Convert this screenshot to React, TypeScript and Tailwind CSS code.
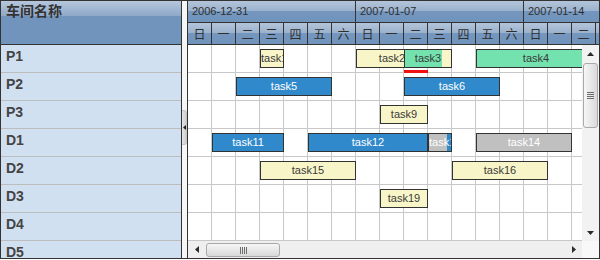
import React from 'react';

const DAYS = ['日', '一', '二', '三', '四', '五', '六'];
const WEEKS = ['2006-12-31', '2007-01-07', '2007-01-14'];
const ROWS = ['P1', 'P2', 'P3', 'D1', 'D2', 'D3', 'D4', 'D5'];

type Kind = 'yellow' | 'green' | 'blue' | 'gray';
type Task = {
  row: number;
  col: number;
  span: number;
  label: string;
  kind: Kind;
  progress?: { pct: number; kind: Kind };
};

const TASKS: Task[] = [
  { row: 0, col: 3, span: 1, label: 'task1', kind: 'yellow' },
  { row: 0, col: 7, span: 3, label: 'task2', kind: 'yellow' },
  { row: 0, col: 9, span: 2, label: 'task3', kind: 'yellow', progress: { pct: 80, kind: 'green' } },
  { row: 0, col: 12, span: 5, label: 'task4', kind: 'green' },
  { row: 1, col: 2, span: 4, label: 'task5', kind: 'blue' },
  { row: 1, col: 9, span: 4, label: 'task6', kind: 'blue' },
  { row: 2, col: 8, span: 2, label: 'task9', kind: 'yellow' },
  { row: 3, col: 1, span: 3, label: 'task11', kind: 'blue' },
  { row: 3, col: 5, span: 5, label: 'task12', kind: 'blue' },
  { row: 3, col: 10, span: 1, label: 'task13', kind: 'blue', progress: { pct: 82, kind: 'gray' } },
  { row: 3, col: 12, span: 4, label: 'task14', kind: 'gray' },
  { row: 4, col: 3, span: 4, label: 'task15', kind: 'yellow' },
  { row: 4, col: 11, span: 4, label: 'task16', kind: 'yellow' },
  { row: 5, col: 8, span: 2, label: 'task19', kind: 'yellow' },
];

const BG: Record<Kind, string> = {
  yellow: 'bg-[#f8f6c8]',
  green: 'bg-[#74e2ae]',
  blue: 'bg-[#3089cb]',
  gray: 'bg-[#c0c0c0]',
};

const TEXT: Record<Kind, string> = {
  yellow: 'text-[#3a3a3a]',
  green: 'text-[#3a3a3a]',
  blue: 'text-white',
  gray: 'text-white',
};

const GLOSS =
  'bg-[linear-gradient(to_bottom,#b3c5da_0%,#9bb2cd_47%,#7597bf_50%,#7093bb_100%)]';

function Bar({ t }: { t: Task }) {
  const top = t.progress ? t.progress.kind : t.kind;
  return (
    <div
      className={`absolute box-border border border-[#333] overflow-hidden ${BG[t.kind]}`}
      style={{ left: t.col * 24, top: t.row * 28 + 4, width: t.span * 24, height: 19 }}
    >
      {t.progress && (
        <div
          className={`absolute left-0 top-0 bottom-0 ${BG[t.progress.kind]}`}
          style={{ width: `${t.progress.pct}%` }}
        />
      )}
      <div className={`relative whitespace-nowrap text-center text-[11px] leading-[17px] ${TEXT[top]}`}>
        {t.label}
      </div>
    </div>
  );
}

function Tri({ dir }: { dir: 'up' | 'down' | 'left' | 'right' }) {
  if (dir === 'up')
    return (
      <svg width="7" height="4" viewBox="0 0 7 4">
        <path d="M0 4 L3.5 0 L7 4Z" fill="#2a2a2a" />
      </svg>
    );
  if (dir === 'down')
    return (
      <svg width="7" height="4" viewBox="0 0 7 4">
        <path d="M0 0 L3.5 4 L7 0Z" fill="#2a2a2a" />
      </svg>
    );
  if (dir === 'left')
    return (
      <svg width="4" height="7" viewBox="0 0 4 7">
        <path d="M4 0 L0 3.5 L4 7Z" fill="#2a2a2a" />
      </svg>
    );
  return (
    <svg width="4" height="7" viewBox="0 0 4 7">
      <path d="M0 0 L4 3.5 L0 7Z" fill="#2a2a2a" />
    </svg>
  );
}

export default function App() {
  return (
    <div className="w-[600px] h-[259px] box-border border border-[#333] flex overflow-hidden bg-white font-['Liberation_Sans','Noto_Sans_CJK_SC',sans-serif]">
      {/* Left panel */}
      <div className="w-[181px] shrink-0 h-full border-r border-[#333] flex flex-col overflow-hidden bg-[#d1e0f1]">
        <div className="h-[44px] shrink-0 border-b border-[#333] bg-[linear-gradient(to_bottom,#b6c7dc_0px,#8ea8c8_15px,#7194bc_15px,#7194bc_100%)]">
          <div className="pl-[5px] pt-[1px] text-[14px] leading-[17px] font-bold text-[#333] font-['Noto_Sans_CJK_SC',sans-serif]">
            车间名称
          </div>
        </div>
        {ROWS.map((r) => (
          <div
            key={r}
            className="h-[28px] shrink-0 border-b border-[#bdbdbd] pl-[5px] pt-[3px] text-[14px] leading-[16px] font-bold text-[#444]"
          >
            {r}
          </div>
        ))}
      </div>

      {/* Splitter */}
      <div className="relative w-[5px] shrink-0 h-full bg-[#f6f6f6]">
        <div className="absolute left-0 top-[109px] w-[5px] h-[35px] rounded-r-[3px] border border-l-0 border-[#c4c4c4] bg-[linear-gradient(to_right,#e4e4e4,#d0d0d0)] flex items-center justify-start pl-[1px]">
          <svg width="3" height="5" viewBox="0 0 3 5">
            <path d="M3 0 L0 2.5 L3 5Z" fill="#222" />
          </svg>
        </div>
      </div>

      {/* Right panel */}
      <div className="flex-1 h-full border-l border-[#333] flex flex-col overflow-hidden">
        {/* Header */}
        <div className="h-[44px] shrink-0 flex flex-col overflow-hidden">
          <div className="h-[22px] shrink-0 flex border-b border-[#333]">
            {WEEKS.map((w) => (
              <div
                key={w}
                className={`w-[168px] shrink-0 h-full border-r border-[#333] pl-[4px] text-[11px] leading-[21px] text-[#2e2e2e] ${GLOSS}`}
              >
                {w}
              </div>
            ))}
          </div>
          <div className="h-[22px] shrink-0 flex border-b border-[#333]">
            {Array.from({ length: 21 }).map((_, i) => (
              <div
                key={i}
                className={`w-[24px] shrink-0 h-full border-r border-[#333] text-center text-[12px] leading-[21px] text-[#2e2e2e] font-['Noto_Sans_CJK_SC',sans-serif] ${GLOSS}`}
              >
                {DAYS[i % 7]}
              </div>
            ))}
          </div>
        </div>

        {/* Body */}
        <div className="flex h-[196px] shrink-0">
          <div className="relative flex-1 overflow-hidden bg-white">
            {Array.from({ length: 7 }).map((_, r) => (
              <div key={r} className="flex h-[28px] border-b border-[#c8c8c8]">
                {Array.from({ length: 21 }).map((_, c) => (
                  <div key={c} className="w-[24px] shrink-0 h-full border-r border-[#c8c8c8]" />
                ))}
              </div>
            ))}
            {TASKS.map((t) => (
              <Bar key={t.label} t={t} />
            ))}
            <div className="absolute left-[216px] top-[25px] w-[24px] h-[3px] bg-[#ee1111]" />
          </div>
          {/* Vertical scrollbar */}
          <div className="w-[17px] shrink-0 h-full bg-[#f2f2f2] flex flex-col items-center">
            <div className="h-[17px] w-full flex items-center justify-center">
              <Tri dir="up" />
            </div>
            <div className="mt-[1px] w-[15px] h-[65px] box-border rounded-[3px] border border-[#a9a9a9] bg-[linear-gradient(to_right,#f6f6f6,#d9d9d9)] flex flex-col items-center justify-center gap-[1px]">
              <div className="w-[7px] h-[1px] bg-[#6d6d6d]" />
              <div className="w-[7px] h-[1px] bg-[#6d6d6d]" />
              <div className="w-[7px] h-[1px] bg-[#6d6d6d]" />
              <div className="w-[7px] h-[1px] bg-[#6d6d6d]" />
            </div>
            <div className="flex-1" />
            <div className="h-[17px] w-full flex items-center justify-center">
              <Tri dir="down" />
            </div>
          </div>
        </div>

        {/* Horizontal scrollbar */}
        <div className="flex h-[17px] shrink-0">
          <div className="flex-1 h-full bg-[#efefef] flex">
            <div className="w-[17px] h-full flex items-center justify-center">
              <Tri dir="left" />
            </div>
            <div className="ml-[1px] mt-[2px] w-[74px] h-[14px] box-border rounded-[3px] border border-[#a9a9a9] bg-[linear-gradient(to_bottom,#f6f6f6,#d9d9d9)] flex items-center justify-center gap-[1px]">
              <div className="w-[1px] h-[7px] bg-[#6d6d6d]" />
              <div className="w-[1px] h-[7px] bg-[#6d6d6d]" />
              <div className="w-[1px] h-[7px] bg-[#6d6d6d]" />
              <div className="w-[1px] h-[7px] bg-[#6d6d6d]" />
            </div>
            <div className="flex-1" />
            <div className="w-[17px] h-full flex items-center justify-center">
              <Tri dir="right" />
            </div>
          </div>
          <div className="w-[17px] shrink-0 h-full bg-[#f8f8f8]" />
        </div>
      </div>
    </div>
  );
}
